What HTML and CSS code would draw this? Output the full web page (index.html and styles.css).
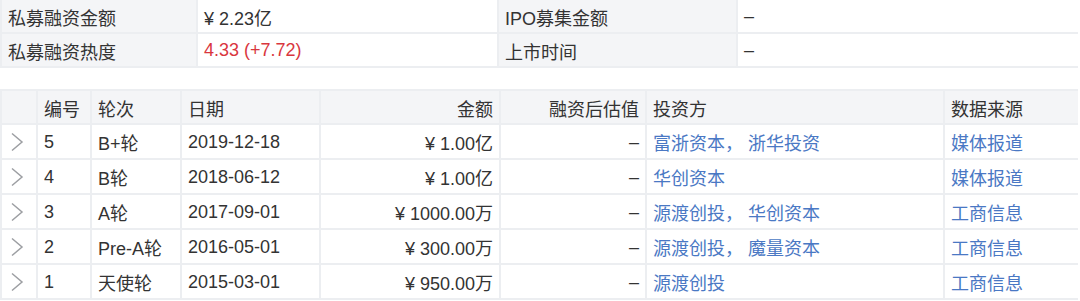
FILE: index.html
```html
<!DOCTYPE html>
<html lang="zh">
<head>
<meta charset="utf-8">
<link rel="stylesheet" href="styles.css">
</head>
<body>
<table class="info">
  <colgroup><col class="c1"><col class="c2"><col class="c3"><col class="c4"></colgroup>
  <tr><th>私募融资金额</th><td>¥ 2.23亿</td><th>IPO募集金额</th><td>–</td></tr>
  <tr><th>私募融资热度</th><td class="red">4.33 (+7.72)</td><th>上市时间</th><td>–</td></tr>
</table>
<table class="rounds">
  <colgroup><col class="k0"><col class="k1"><col class="k2"><col class="k3"><col class="k4"><col class="k5"><col class="k6"><col class="k7"></colgroup>
  <tr class="head"><th></th><th>编号</th><th>轮次</th><th>日期</th><th class="r">金额</th><th class="r">融资后估值</th><th>投资方</th><th>数据来源</th></tr>
  <tr><td class="chev"><svg width="14" height="20" viewBox="0 0 14 20"><polyline points="2,1.5 12,10 2,18.5" fill="none" stroke="#9d9fa3" stroke-width="1.5"/></svg></td><td>5</td><td>B+轮</td><td>2019-12-18</td><td class="r">¥ 1.00亿</td><td class="r">–</td><td class="link">富浙资本， 浙华投资</td><td class="link">媒体报道</td></tr>
  <tr><td class="chev"><svg width="14" height="20" viewBox="0 0 14 20"><polyline points="2,1.5 12,10 2,18.5" fill="none" stroke="#9d9fa3" stroke-width="1.5"/></svg></td><td>4</td><td>B轮</td><td>2018-06-12</td><td class="r">¥ 1.00亿</td><td class="r">–</td><td class="link">华创资本</td><td class="link">媒体报道</td></tr>
  <tr><td class="chev"><svg width="14" height="20" viewBox="0 0 14 20"><polyline points="2,1.5 12,10 2,18.5" fill="none" stroke="#9d9fa3" stroke-width="1.5"/></svg></td><td>3</td><td>A轮</td><td>2017-09-01</td><td class="r">¥ 1000.00万</td><td class="r">–</td><td class="link">源渡创投， 华创资本</td><td class="link">工商信息</td></tr>
  <tr><td class="chev"><svg width="14" height="20" viewBox="0 0 14 20"><polyline points="2,1.5 12,10 2,18.5" fill="none" stroke="#9d9fa3" stroke-width="1.5"/></svg></td><td>2</td><td>Pre-A轮</td><td>2016-05-01</td><td class="r">¥ 300.00万</td><td class="r">–</td><td class="link">源渡创投， 魔量资本</td><td class="link">工商信息</td></tr>
  <tr><td class="chev"><svg width="14" height="20" viewBox="0 0 14 20"><polyline points="2,1.5 12,10 2,18.5" fill="none" stroke="#9d9fa3" stroke-width="1.5"/></svg></td><td>1</td><td>天使轮</td><td>2015-03-01</td><td class="r">¥ 950.00万</td><td class="r">–</td><td class="link">源渡创投</td><td class="link">工商信息</td></tr>
</table>
</body>
</html>
```
FILE: styles.css
```css
html, body {
  margin: 0;
  padding: 0;
  background: #fff;
}
body {
  font-family: "Liberation Sans", "Noto Sans CJK SC", sans-serif;
  font-size: 18px;
  color: #333;
  width: 1078px;
}
table {
  border-collapse: collapse;
  table-layout: fixed;
  width: 1078px;
}
th, td {
  border: 2px solid #eceef1;
  padding: 1px 6px 0;
  text-align: left;
  font-weight: normal;
  white-space: nowrap;
  overflow: hidden;
}
.info tr:first-child th, .info tr:first-child td { border-top: 0; }
.info th, .info td { height: 31px; }
.info th { background: #f4f5f7; }
.info .c1 { width: 196px; }
.info .c2 { width: 301px; }
.info .c3 { width: 239px; }
.info .c4 { width: 342px; }
.red { color: #d9363e; }

.rounds { margin-top: 21px; }
.rounds th, .rounds td { height: 32px; }
.rounds .head th { background: #f4f5f7; height: 31px; }
.rounds .r { text-align: right; }
.rounds .link { color: #4a78c4; }
.rounds .chev { padding: 0 0 0 8px; }
.rounds .chev svg { display: block; }
.k0 { width: 36px; }
.k1 { width: 54px; }
.k2 { width: 90px; }
.k3 { width: 139px; }
.k4 { width: 180px; }
.k5 { width: 146px; }
.k6 { width: 298px; }
.k7 { width: 135px; }
```
